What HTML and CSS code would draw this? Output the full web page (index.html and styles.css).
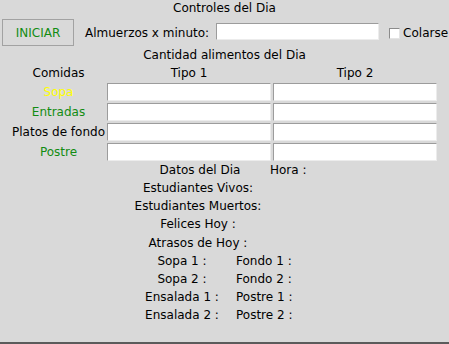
FILE: index.html
```html
<!DOCTYPE html>
<html lang="es">
<head>
<meta charset="utf-8">
<title>Controles del Dia</title>
<link rel="stylesheet" href="styles.css">
</head>
<body>
<div class="app">
  <div class="title">Controles del Dia</div>
  <div class="controls">
    <button class="btn">INICIAR</button>
    <span class="lbl-almuerzos">Almuerzos x minuto:</span>
    <span class="entry entry-main"></span>
    <span class="check"><span class="box"></span>Colarse</span>
  </div>
  <div class="subtitle">Cantidad alimentos del Dia</div>
  <div class="table">
    <div class="cell top">Comidas</div>
    <div class="cell top head">Tipo 1</div>
    <div class="cell top head">Tipo 2</div>

    <div class="cell yellow">Sopa</div>
    <span class="entry"></span>
    <span class="entry"></span>

    <div class="cell green">Entradas</div>
    <span class="entry"></span>
    <span class="entry"></span>

    <div class="cell">Platos de fondo</div>
    <span class="entry"></span>
    <span class="entry"></span>

    <div class="cell green">Postre</div>
    <span class="entry"></span>
    <span class="entry"></span>
  </div>
  <div class="stats">
    <div class="row row-head"><span>Datos del Dia</span><span>Hora :</span></div>
    <div class="row row-single">Estudiantes Vivos:</div>
    <div class="row row-single">Estudiantes Muertos:</div>
    <div class="row row-single">Felices Hoy :</div>
    <div class="row row-single">Atrasos de Hoy :</div>
    <div class="row row-pair"><span>Sopa 1 :</span><span>Fondo 1 :</span></div>
    <div class="row row-pair"><span>Sopa 2 :</span><span>Fondo 2 :</span></div>
    <div class="row row-pair"><span>Ensalada 1 :</span><span>Postre 1 :</span></div>
    <div class="row row-pair"><span>Ensalada 2 :</span><span>Postre 2 :</span></div>
  </div>
</div>
</body>
</html>
```
FILE: styles.css
```css
* { box-sizing: border-box; }
html, body {
  margin: 0;
  padding: 0;
  background: #d9d9d9;
}
body {
  width: 449px;
  height: 344px;
  overflow: hidden;
  font-family: "DejaVu Sans", sans-serif;
  font-size: 12px;
  color: #000;
}
.app {
  height: 344px;
  border-bottom: 2px solid #5b5b5b;
}
.title {
  height: 17px;
  line-height: 17px;
  text-align: center;
}
.controls {
  display: flex;
  align-items: center;
  height: 27px;
  margin-top: 2px;
  padding-left: 2px;
  white-space: nowrap;
}
.controls > * {
  flex-shrink: 0;
}
.btn {
  width: 72px;
  height: 27px;
  margin: 0;
  padding: 0;
  border: 1px solid #a2a2a2;
  background: #d9d9d9;
  color: #128c12;
  font: inherit;
}
.lbl-almuerzos {
  margin-left: 11px;
}
.entry {
  display: block;
  height: 18px;
  width: 164px;
  background: #fff;
  border: 1px solid;
  border-color: #9c9c9c #ececec #ececec #9c9c9c;
}
.entry-main {
  width: 163px;
  height: 17px;
  margin-left: 7px;
  margin-top: -2px;
}
.check {
  display: flex;
  align-items: center;
  margin-left: 10px;
  margin-top: 1px;
}
.box {
  display: block;
  width: 11px;
  height: 11px;
  background: #fff;
  border: 1px solid;
  border-color: #8c8c8c #e4e4e4 #e4e4e4 #8c8c8c;
  margin-right: 3px;
}
.subtitle {
  height: 17px;
  padding-top: 1px;
  line-height: 17px;
  text-align: center;
}
.table {
  display: grid;
  grid-template-columns: 97px 166px 164px;
  grid-template-rows: 18px repeat(4, 18px);
  row-gap: 2px;
  margin-left: 10px;
}
.cell {
  display: flex;
  align-items: center;
  justify-content: center;
  white-space: nowrap;
}
.cell.top {
  padding-top: 2px;
}
.table .head {
  width: 164px;
}
.yellow { color: #ffff00; }
.green { color: #128c12; }
.row {
  height: 18.15px;
  line-height: 18px;
  white-space: nowrap;
}
.row-head {
  display: grid;
  grid-template-columns: 140px auto;
  margin-left: 130px;
}
.row-head span:first-child { text-align: center; }
.row-single {
  width: 396px;
  text-align: center;
}
.row-pair {
  display: grid;
  grid-template-columns: 104px auto;
  column-gap: 2px;
  margin-left: 130px;
}
.row-pair span:first-child { text-align: center; }
```
